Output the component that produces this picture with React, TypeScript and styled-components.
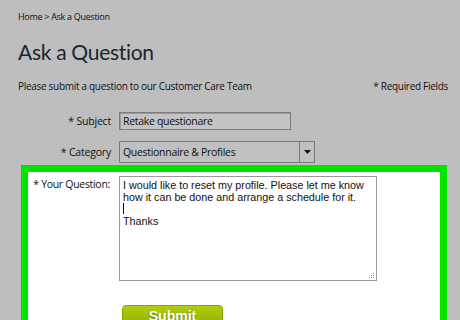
import React from 'react';
import styled, { createGlobalStyle } from 'styled-components';

const GlobalStyle = createGlobalStyle`
  html, body {
    margin: 0;
    padding: 0;
    background: #bebebe;
  }
  body {
    font-family: 'Open Sans', 'Liberation Sans', sans-serif;
    color: #111;
  }
`;

const Page = styled.div`
  width: 460px;
  height: 320px;
  overflow: hidden;
  background: #bebebe;
  padding: 10px 0 0 18px;
  box-sizing: border-box;
`;

const Crumbs = styled.div`
  font-size: 9px;
  letter-spacing: -0.3px;
  color: #111;
  height: 14px;
`;

const Title = styled.h1`
  margin: 14px 0 0 0;
  font-family: Lato, 'Open Sans', sans-serif;
  font-size: 21px;
  font-weight: 400;
  letter-spacing: -0.3px;
  color: #17262e;
  line-height: 28px;
`;

const IntroRow = styled.div`
  display: flex;
  justify-content: space-between;
  margin-top: 13px;
  width: 430px;
  font-size: 10px;
  letter-spacing: -0.3px;
`;

const FieldRow = styled.div<{ $top: number }>`
  display: flex;
  align-items: center;
  margin-top: ${(p) => p.$top}px;
`;

const Label = styled.label`
  width: 93px;
  text-align: right;
  font-size: 10.5px;
  letter-spacing: -0.2px;
  padding-right: 8px;
`;

const TextInput = styled.div`
  width: 167px;
  height: 16px;
  border: 1px solid #7d7d7d;
  box-shadow: inset 1px 1px 0 #9a9a9a;
  background: #c4c4c4;
  font-size: 10.5px;
  letter-spacing: -0.3px;
  line-height: 16px;
  padding-left: 3px;
  box-sizing: content-box;
`;

const Select = styled.div`
  display: flex;
  width: 194px;
  height: 20px;
  border: 1px solid #7a7a7a;
  background: #c0c0c0;
`;

const SelectValue = styled.div`
  flex: 1;
  font-size: 10.5px;
  letter-spacing: -0.3px;
  line-height: 20px;
  padding-left: 3px;
`;

const SelectArrow = styled.div`
  width: 14px;
  border-left: 1px solid #7a7a7a;
  display: flex;
  align-items: center;
  justify-content: center;
`;

const Highlight = styled.div`
  margin: 2px 0 0 3px;
  width: 426px;
  height: 160px;
  border: 7px solid #00e400;
  border-bottom: none;
  background: #ffffff;
  box-sizing: border-box;
  padding-top: 4px;
`;

const QuestionRow = styled.div`
  display: flex;
  align-items: flex-start;
`;

const QuestionLabel = styled(Label)`
  width: 82px;
  padding-right: 9px;
  padding-top: 1px;
  font-size: 10.5px;
  letter-spacing: -0.3px;
`;

const TextArea = styled.div`
  position: relative;
  width: 258px;
  height: 105px;
  border: 1px solid #9a9a9a;
  padding: 2px 3px;
  box-sizing: border-box;
  font-family: 'Liberation Sans', Arial, sans-serif;
  font-size: 10.75px;
  line-height: 12px;
  color: #111;
`;

const Line = styled.div`
  height: 12px;
  white-space: nowrap;
`;

const Caret = styled.span`
  display: inline-block;
  width: 1px;
  height: 11px;
  background: #111;
  vertical-align: top;
  margin-left: 0;
`;

const Grip = styled.svg`
  position: absolute;
  right: 1px;
  bottom: 1px;
`;

const SubmitButton = styled.button`
  margin: 24px 0 0 94px;
  width: 101px;
  height: 24px;
  border: 1px solid #8aa400;
  border-radius: 4px;
  background: linear-gradient(#b4cc10, #8eac00);
  color: #ffffff;
  font-family: 'Liberation Sans', Arial, sans-serif;
  font-weight: 700;
  font-size: 14px;
  padding: 0;
  padding-bottom: 2px;
  text-shadow: 0 1px 1px #5a6e00;
`;

export default function App() {
  return (
    <Page>
      <GlobalStyle />
      <Crumbs>Home &gt; Ask a Question</Crumbs>
      <Title>Ask a Question</Title>
      <IntroRow>
        <span>Please submit a question to our Customer Care Team</span>
        <span>* Required Fields</span>
      </IntroRow>
      <FieldRow $top={19}>
        <Label>* Subject</Label>
        <TextInput>Retake questionare</TextInput>
      </FieldRow>
      <FieldRow $top={11}>
        <Label>* Category</Label>
        <Select>
          <SelectValue>Questionnaire &amp; Profiles</SelectValue>
          <SelectArrow>
            <svg width="7" height="4" viewBox="0 0 7 4">
              <path d="M0 0 H7 L3.5 4 Z" fill="#111" />
            </svg>
          </SelectArrow>
        </Select>
      </FieldRow>
      <Highlight>
        <QuestionRow>
          <QuestionLabel>* Your Question:</QuestionLabel>
          <TextArea>
            <Line>I would like to reset my profile. Please let me know</Line>
            <Line>how it can be done and arrange a schedule for it.</Line>
            <Line>
              <Caret />
            </Line>
            <Line>Thanks</Line>
            <Grip width="7" height="7" viewBox="0 0 7 7">
              <rect x="5" y="1" width="1" height="1" fill="#888" />
              <rect x="3" y="3" width="1" height="1" fill="#888" />
              <rect x="5" y="3" width="1" height="1" fill="#888" />
              <rect x="1" y="5" width="1" height="1" fill="#888" />
              <rect x="3" y="5" width="1" height="1" fill="#888" />
              <rect x="5" y="5" width="1" height="1" fill="#888" />
            </Grip>
          </TextArea>
        </QuestionRow>
        <SubmitButton>Submit</SubmitButton>
      </Highlight>
    </Page>
  );
}
